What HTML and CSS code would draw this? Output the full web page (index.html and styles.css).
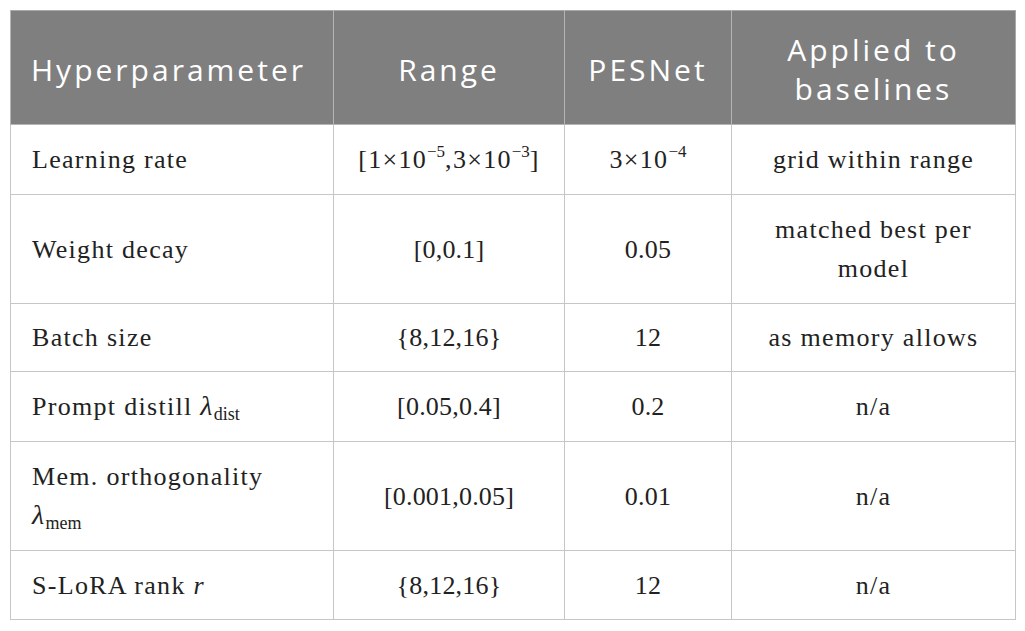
FILE: index.html
```html
<!DOCTYPE html>
<html>
<head>
<meta charset="utf-8">
<link rel="stylesheet" href="styles.css">
</head>
<body>
<table class="hp-table">
  <colgroup>
    <col class="c1"><col class="c2"><col class="c3"><col class="c4">
  </colgroup>
  <thead>
    <tr>
      <th class="left">Hyperparameter</th>
      <th>Range</th>
      <th>PESNet</th>
      <th>Applied to<br>baselines</th>
    </tr>
  </thead>
  <tbody>
    <tr>
      <td class="left">Learning rate</td>
      <td>[1×10<sup>−5</sup>,3×10<sup>−3</sup>]</td>
      <td>3×10<sup>−4</sup></td>
      <td>grid within range</td>
    </tr>
    <tr class="tall">
      <td class="left">Weight decay</td>
      <td class="num">[0,0.1]</td>
      <td class="num">0.05</td>
      <td>matched best per<br>model</td>
    </tr>
    <tr class="short">
      <td class="left">Batch size</td>
      <td class="num">{8,12,16}</td>
      <td class="num">12</td>
      <td>as memory allows</td>
    </tr>
    <tr>
      <td class="left">Prompt distill <i class="sym">λ</i><sub>dist</sub></td>
      <td class="num">[0.05,0.4]</td>
      <td class="num">0.2</td>
      <td>n/a</td>
    </tr>
    <tr class="tall">
      <td class="left">Mem. orthogonality<br><i class="sym">λ</i><sub>mem</sub></td>
      <td class="num">[0.001,0.05]</td>
      <td class="num">0.01</td>
      <td>n/a</td>
    </tr>
    <tr class="last">
      <td class="left">S-LoRA rank <i>r</i></td>
      <td class="num">{8,12,16}</td>
      <td class="num">12</td>
      <td>n/a</td>
    </tr>
  </tbody>
</table>
</body>
</html>
```

FILE: styles.css
```css
html, body {
  margin: 0;
  padding: 0;
  background: #ffffff;
}

body {
  padding: 10px 10px;
}

.hp-table {
  border-collapse: collapse;
  table-layout: fixed;
  width: 1005px;
  border: 1px solid #a9a9a9;
}

.c1 { width: 323px; }
.c2 { width: 231px; }
.c3 { width: 167px; }
.c4 { width: 284px; }

.hp-table th {
  background: #7f7f7f;
  color: #ffffff;
  font-family: "Open Sans", "DejaVu Sans", sans-serif;
  font-weight: 400;
  font-size: 30px;
  letter-spacing: 3px;
  line-height: 39px;
  height: 114px;
  padding: 3px 6px 0;
  box-sizing: border-box;
  text-align: center;
  vertical-align: middle;
  border-left: 1px solid #b5b5b5;
  border-bottom: 1px solid #b5b5b5;
}

.hp-table td {
  font-family: "Liberation Serif", "Times New Roman", serif;
  font-size: 26px;
  letter-spacing: 1.3px;
  line-height: 39px;
  color: #222222;
  height: 39px;
  padding: 15px 10px;
  text-align: center;
  vertical-align: middle;
  border: 1px solid #c6c6c6;
}

.hp-table td.num {
  letter-spacing: 0.2px;
}

.hp-table .left {
  text-align: left;
  padding-left: 21px;
}

.hp-table th.left {
  padding-left: 20px;
}

.hp-table tr.tall td {
  height: 78px;
}

.hp-table tr.short td {
  padding-top: 14px;
  padding-bottom: 14px;
}

.hp-table tr.last td {
  padding-top: 15px;
  padding-bottom: 14px;
}

.hp-table sup {
  font-size: 17px;
  line-height: 0;
  vertical-align: 11px;
  letter-spacing: 0;
}

.hp-table sub {
  font-size: 18px;
  line-height: 0;
  vertical-align: -5px;
  letter-spacing: 0;
}

.sym {
  font-style: italic;
  font-size: 28px;
  line-height: 0;
}
```
